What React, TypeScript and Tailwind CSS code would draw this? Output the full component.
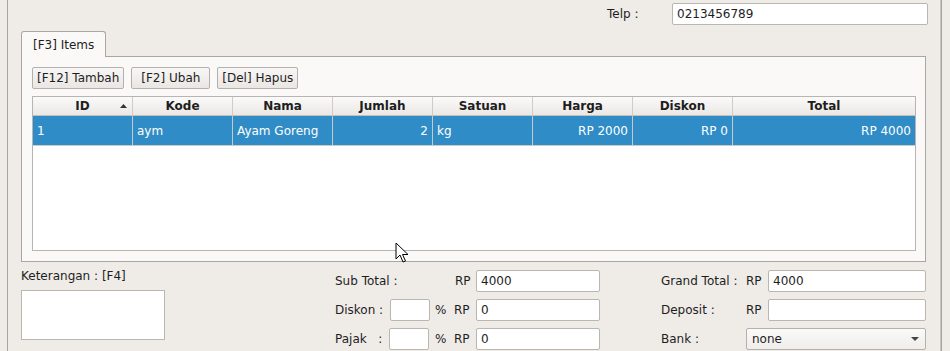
import { useState } from 'react';

const columns = [
  { key: 'id', label: 'ID', align: 'left' },
  { key: 'kode', label: 'Kode', align: 'left' },
  { key: 'nama', label: 'Nama', align: 'left' },
  { key: 'jumlah', label: 'Jumlah', align: 'right' },
  { key: 'satuan', label: 'Satuan', align: 'left' },
  { key: 'harga', label: 'Harga', align: 'right' },
  { key: 'diskon', label: 'Diskon', align: 'right' },
  { key: 'total', label: 'Total', align: 'right' },
];

const rows = [
  { id: '1', kode: 'aym', nama: 'Ayam Goreng', jumlah: '2', satuan: 'kg', harga: 'RP 2000', diskon: 'RP 0', total: 'RP 4000' },
];

function Field({ value = '', className = '' }: { value?: string; className?: string }) {
  return (
    <div className={`h-[22px] rounded-[2px] border border-[#bab6b1] bg-white px-[4px] flex items-center ${className}`}>
      {value}
    </div>
  );
}

function Button({ children }: { children: React.ReactNode }) {
  return (
    <div className="h-[22px] min-w-[79px] px-[4px] rounded-[2px] border border-[#b4b0ab] bg-gradient-to-b from-[#f8f7f6] to-[#e9e6e3] flex items-center justify-center">
      {children}
    </div>
  );
}

function Cursor() {
  return (
    <svg className="absolute left-[395px] top-[242px]" width="14" height="22" viewBox="0 0 14 22">
      <path d="M1 1 L1 17 L5 13 L8 20 L10.5 19 L7.5 12.5 L13 12.5 Z" fill="#fff" stroke="#000" strokeWidth="1" strokeLinejoin="miter" />
    </svg>
  );
}

export default function App() {
  const [selected] = useState(0);

  return (
    <div
      className="relative w-[950px] h-[351px] overflow-hidden bg-[#efebe7] text-[12px] text-[#1e1e1e] flex"
      style={{ fontFamily: '"DejaVu Sans", sans-serif' }}
    >
      <div className="w-[7px] shrink-0" />
      <div className="w-[1px] shrink-0 bg-[#a8a4a0]" />

      <div className="w-[932px] shrink-0 pl-[13px] pr-[14px] flex flex-col">
        {/* top row */}
        <div className="h-[31px] pt-[3px] flex justify-end">
          <div className="flex items-start -mr-[2px]">
            <span className="w-[65px] h-[22px] leading-[22px]">Telp :</span>
            <Field value="0213456789" className="w-[256px]" />
          </div>
        </div>

        {/* tab */}
        <div className="h-[25px] flex items-end">
          <div className="h-[26px] -mb-[1px] relative z-10 px-[11px] rounded-t-[3px] border border-b-0 border-[#aaa6a1] bg-[#fbf9f7] flex items-center">
            [F3] Items
          </div>
        </div>

        <div className="h-[206px] border border-[#aaa6a1] bg-[#fbf9f7] pt-[10px] pl-[10px] pr-[9px]">
          <div className="flex gap-[7px]">
            <Button>[F12] Tambah</Button>
            <Button>[F2] Ubah</Button>
            <Button>[Del] Hapus</Button>
          </div>

          <div className="mt-[7px] h-[155px] border border-[#b8b4af] bg-white">
            <div className="grid grid-cols-[100px_100px_100px_100px_100px_100px_100px_1fr] h-[19px] bg-gradient-to-b from-[#fbfafa] to-[#ebe8e5] border-b border-[#c4c0bb]">
              {columns.map((c, i) => (
                <div
                  key={c.key}
                  className={`relative font-bold flex items-center justify-center ${i < columns.length - 1 ? 'border-r border-[#cfcbc6]' : ''}`}
                >
                  {c.label}
                  {i === 0 && (
                    <svg className="absolute right-[5px] top-[7px]" width="7" height="4" viewBox="0 0 7 4">
                      <path d="M0 4 L3.5 0 L7 4 Z" fill="#333" />
                    </svg>
                  )}
                </div>
              ))}
            </div>
            {rows.map((r, ri) => (
              <div
                key={r.id}
                className={`grid grid-cols-[100px_100px_100px_100px_100px_100px_100px_1fr] h-[30px] border-b border-[#cfcbc6] ${ri === selected ? 'bg-[#308cc6] text-white' : ''}`}
              >
                {columns.map((c, i) => (
                  <div
                    key={c.key}
                    className={`px-[4px] flex items-center ${c.align === 'right' ? 'justify-end' : ''} ${i < columns.length - 1 ? 'border-r border-[#c8c8c8]' : ''}`}
                  >
                    {(r as Record<string, string>)[c.key]}
                  </div>
                ))}
              </div>
            ))}
          </div>
        </div>

        {/* bottom */}
        <div className="flex pt-[6px]">
          <div className="w-[144px] shrink-0">
            <div className="h-[22px] leading-[16px]">Keterangan : [F4]</div>
            <div className="h-[50px] border border-[#bab6b1] bg-white" />
          </div>

          <div className="ml-[170px] w-[265px] shrink-0 pt-[2px] flex flex-col gap-[7px]">
            <div className="flex items-center h-[22px]">
              <span className="w-[120px]">Sub Total :</span>
              <span className="w-[21px]">RP</span>
              <Field value="4000" className="w-[124px]" />
            </div>
            <div className="flex items-center h-[22px]">
              <span className="w-[55px]">Diskon :</span>
              <Field className="w-[40px]" />
              <span className="ml-[5px] w-[19px]">%</span>
              <span className="w-[22px]">RP</span>
              <Field value="0" className="w-[124px]" />
            </div>
            <div className="flex items-center h-[22px]">
              <span className="w-[54px] whitespace-pre">Pajak   :</span>
              <Field className="w-[40px]" />
              <span className="ml-[6px] w-[19px]">%</span>
              <span className="w-[22px]">RP</span>
              <Field value="0" className="w-[124px]" />
            </div>
          </div>

          <div className="ml-[61px] w-[265px] shrink-0 pt-[2px] flex flex-col gap-[7px]">
            <div className="flex items-center h-[22px]">
              <span className="w-[85px]">Grand Total :</span>
              <span className="w-[22px]">RP</span>
              <Field value="4000" className="w-[158px]" />
            </div>
            <div className="flex items-center h-[22px]">
              <span className="w-[85px]">Deposit :</span>
              <span className="w-[22px]">RP</span>
              <Field className="w-[158px]" />
            </div>
            <div className="flex items-center h-[22px]">
              <span className="w-[85px]">Bank :</span>
              <div className="w-[180px] h-[22px] rounded-[2px] border border-[#b4b0ab] bg-gradient-to-b from-[#fbfafa] to-[#f0edea] pl-[5px] pr-[6px] flex items-center justify-between">
                <span>none</span>
                <svg width="8" height="4" viewBox="0 0 8 4">
                  <path d="M0 0 L8 0 L4 4 Z" fill="#444" />
                </svg>
              </div>
            </div>
          </div>
        </div>
      </div>

      <div className="w-[1px] shrink-0 bg-[#c8c4c0]" />
      <div className="w-[1px] shrink-0 bg-[#a8a4a0]" />

      <Cursor />
    </div>
  );
}
